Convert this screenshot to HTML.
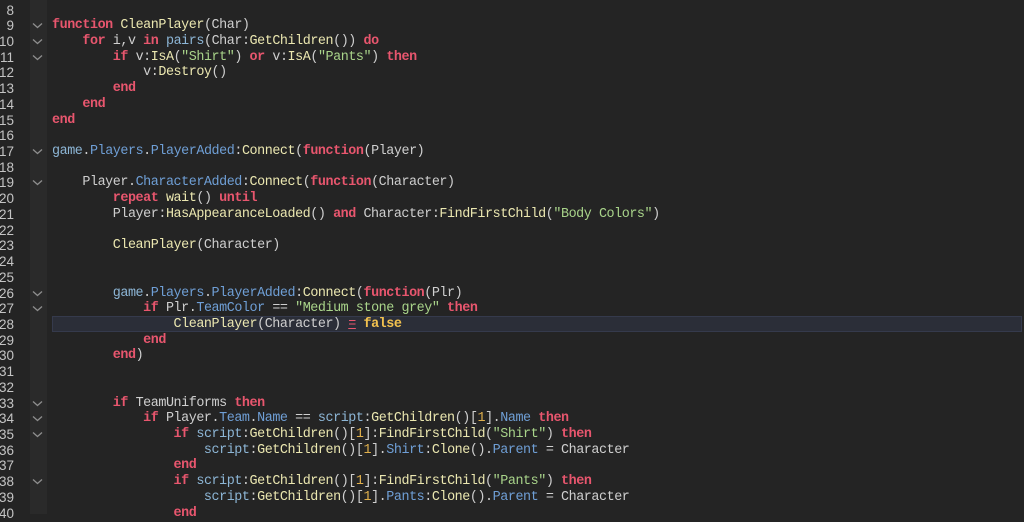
<!DOCTYPE html>
<html><head><meta charset="utf-8"><style>
html,body{margin:0;padding:0;width:1024px;height:514px;overflow:hidden;background:#242424;}
body{font-family:"Liberation Mono","DejaVu Sans Mono",monospace;font-size:13.4px;letter-spacing:-0.44px;color:#cfcfcf;}
.gut{position:absolute;left:0;top:0;width:30px;height:514px;background:#242424;}
.fold{position:absolute;left:30px;top:0;width:17px;height:514px;background:#2a2a2a;}
.ln{position:absolute;left:-2px;width:16px;text-align:right;color:#c4c4c4;font-family:"Liberation Sans","DejaVu Sans",sans-serif;font-size:13.5px;letter-spacing:0;}
.ch{position:absolute;left:32px;width:11px;height:7px;}
.code{position:absolute;left:52px;white-space:pre;}
.hl{position:absolute;left:52px;width:970px;height:16px;top:316px;background:#2b2e38;border:1px solid #353a4c;box-sizing:border-box;}
.k{color:#e8566e;font-weight:bold}
.f{color:#ebe7b0}
.m{color:#6f9fd6}
.g{color:#8db6d6}
.s{color:#a9d48a}
.n{color:#e0b04c}
.b{color:#f2c14e;font-weight:bold}
.u{color:#e8566e;text-decoration:underline}
</style></head><body>
<div class="gut"></div><div class="fold"></div>
<div class="hl"></div>
<div id="c"></div>
<script>
var L={
8:'',
9:'<span class="k">function</span> <span class="f">CleanPlayer</span>(Char)',
10:'    <span class="k">for</span> i,v <span class="k">in</span> <span class="g">pairs</span>(Char:<span class="f">GetChildren</span>()) <span class="k">do</span>',
11:'        <span class="k">if</span> v:<span class="f">IsA</span>(<span class="s">"Shirt"</span>) <span class="k">or</span> v:<span class="f">IsA</span>(<span class="s">"Pants"</span>) <span class="k">then</span>',
12:'            v:<span class="f">Destroy</span>()',
13:'        <span class="k">end</span>',
14:'    <span class="k">end</span>',
15:'<span class="k">end</span>',
16:'',
17:'<span class="g">game</span>.<span class="m">Players</span>.<span class="m">PlayerAdded</span>:<span class="f">Connect</span>(<span class="k">function</span>(Player)',
18:'',
19:'    Player.<span class="m">CharacterAdded</span>:<span class="f">Connect</span>(<span class="k">function</span>(Character)',
20:'        <span class="k">repeat</span> <span class="f">wait</span>() <span class="k">until</span>',
21:'        Player:<span class="f">HasAppearanceLoaded</span>() <span class="k">and</span> Character:<span class="f">FindFirstChild</span>(<span class="s">"Body Colors"</span>)',
22:'',
23:'        <span class="f">CleanPlayer</span>(Character)',
24:'',25:'',
26:'        <span class="g">game</span>.<span class="m">Players</span>.<span class="m">PlayerAdded</span>:<span class="f">Connect</span>(<span class="k">function</span>(Plr)',
27:'            <span class="k">if</span> Plr.<span class="m">TeamColor</span> == <span class="s">"Medium stone grey"</span> <span class="k">then</span>',
28:'                <span class="f">CleanPlayer</span>(Character) <span class="u">=</span> <span class="b">false</span>',
29:'            <span class="k">end</span>',
30:'        <span class="k">end</span>)',
31:'',32:'',
33:'        <span class="k">if</span> TeamUniforms <span class="k">then</span>',
34:'            <span class="k">if</span> Player.<span class="m">Team</span>.<span class="m">Name</span> == <span class="g">script</span>:<span class="f">GetChildren</span>()[<span class="n">1</span>].<span class="m">Name</span> <span class="k">then</span>',
35:'                <span class="k">if</span> <span class="g">script</span>:<span class="f">GetChildren</span>()[<span class="n">1</span>]:<span class="f">FindFirstChild</span>(<span class="s">"Shirt"</span>) <span class="k">then</span>',
36:'                    <span class="g">script</span>:<span class="f">GetChildren</span>()[<span class="n">1</span>].<span class="m">Shirt</span>:<span class="f">Clone</span>().<span class="m">Parent</span> = Character',
37:'                <span class="k">end</span>',
38:'                <span class="k">if</span> <span class="g">script</span>:<span class="f">GetChildren</span>()[<span class="n">1</span>]:<span class="f">FindFirstChild</span>(<span class="s">"Pants"</span>) <span class="k">then</span>',
39:'                    <span class="g">script</span>:<span class="f">GetChildren</span>()[<span class="n">1</span>].<span class="m">Pants</span>:<span class="f">Clone</span>().<span class="m">Parent</span> = Character',
40:'                <span class="k">end</span>'
};
var folds=[9,10,11,17,19,26,27,33,34,35,38];
var h='';
for(var n=8;n<=40;n++){
 var t=8+(n-8)*15.72-5.5;
 h+='<div class="ln" style="top:'+t.toFixed(1)+'px;line-height:16px">'+n+'</div>';
 if(folds.indexOf(n)>=0)h+='<svg class="ch" style="top:'+(t+4).toFixed(1)+'px" viewBox="0 0 11 7"><path d="M1 1.5 L5.5 5.5 L10 1.5" fill="none" stroke="#8e8e8e" stroke-width="1.3"/></svg>';
 h+='<div class="code" style="top:'+t.toFixed(1)+'px;line-height:16px">'+L[n]+'</div>';
}
document.getElementById('c').innerHTML=h;
</script>
</body></html>
